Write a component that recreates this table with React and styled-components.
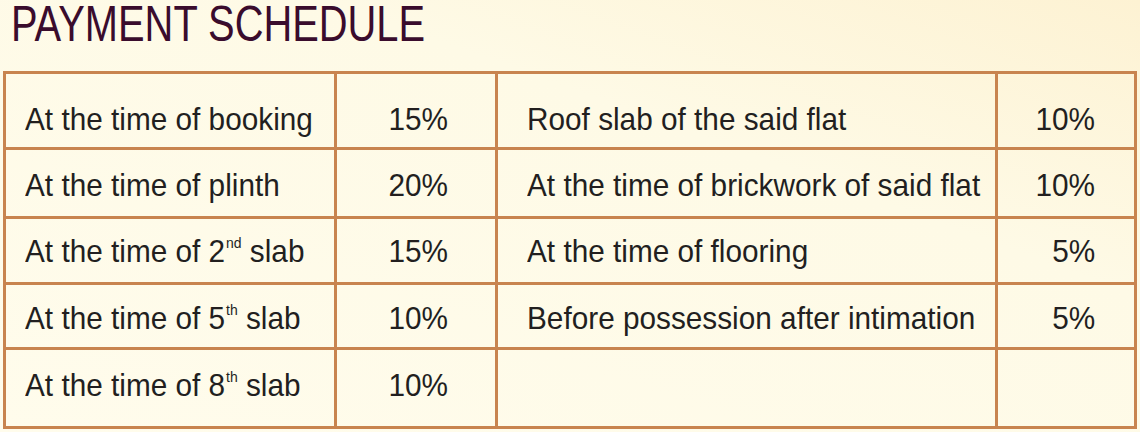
import React from 'react';
import styled, { createGlobalStyle } from 'styled-components';

const GlobalStyle = createGlobalStyle`
  html, body {
    margin: 0;
    padding: 0;
  }
  body {
    width: 1140px;
    height: 432px;
    overflow: hidden;
    background: linear-gradient(200deg, #fdf2d3 0%, #fefae6 35%, #fffcec 100%);
    font-family: "Liberation Sans", Arial, sans-serif;
  }
`;

const Page = styled.div`
  display: flex;
  flex-direction: column;
  padding: 0 3px;
`;

const Title = styled.h1`
  margin: 0;
  padding: 0 0 0 8px;
  height: 71px;
  box-sizing: border-box;
  font-size: 50px;
  line-height: 48px;
  font-weight: normal;
  color: #3a0c2d;
`;

// condensed face: squeeze the regular sans sideways
const Narrow = styled.span`
  display: inline-block;
  white-space: nowrap;
  transform: scaleX(${p => p.$sx});
  transform-origin: ${p => (p.$right ? 'right' : 'left')} center;
`;

const Grid = styled.div`
  display: grid;
  grid-template-columns: 331px 161px 500px 139px;
  border-left: 3px solid #c8844f;
  border-top: 3px solid #c8844f;
  width: 1134px;
  box-sizing: border-box;
`;

const Cell = styled.div`
  box-sizing: border-box;
  height: ${p => p.$h}px;
  padding-top: ${p => p.$pt}px;
  border-right: 3px solid #c8844f;
  border-bottom: 3px solid #c8844f;
  font-size: 32px;
  line-height: 36px;
  color: #221f1f;
  text-align: ${p => (p.$num ? 'right' : 'left')};
  padding-left: ${p => (p.$num ? 0 : p.$pl)}px;
  padding-right: ${p => (p.$num ? p.$pr : 0)}px;
  white-space: nowrap;
`;

const Sup = styled.sup`
  font-size: 15px;
  line-height: 0;
  vertical-align: 14px;
  margin-left: 1px;
`;

const rows = [
  { h: 76, pt: 27, a: <>At the time of booking</>, b: '15%', c: 'Roof slab of the said flat', d: '10%' },
  { h: 69, pt: 17, a: <>At the time of plinth</>, b: '20%', c: 'At the time of brickwork of said flat', d: '10%' },
  { h: 66, pt: 14, a: <>At the time of 2<Sup>nd</Sup> slab</>, b: '15%', c: 'At the time of flooring', d: '5%' },
  { h: 65, pt: 15, a: <>At the time of 5<Sup>th</Sup> slab</>, b: '10%', c: 'Before possession after intimation', d: '5%' },
  { h: 79, pt: 17, a: <>At the time of 8<Sup>th</Sup> slab</>, b: '10%', c: '', d: '' },
];

const SX = 0.93;

export default function App() {
  return (
    <>
      <GlobalStyle />
      <Page>
        <Title><Narrow $sx={0.797}>PAYMENT SCHEDULE</Narrow></Title>
        <Grid>
          {rows.map((r, i) => (
            <React.Fragment key={i}>
              <Cell $h={r.h} $pt={r.pt} $pl={19}><Narrow $sx={SX}>{r.a}</Narrow></Cell>
              <Cell $h={r.h} $pt={r.pt} $num $pr={47}><Narrow $sx={SX} $right>{r.b}</Narrow></Cell>
              <Cell $h={r.h} $pt={r.pt} $pl={29}><Narrow $sx={SX}>{r.c}</Narrow></Cell>
              <Cell $h={r.h} $pt={r.pt} $num $pr={39}><Narrow $sx={SX} $right>{r.d}</Narrow></Cell>
            </React.Fragment>
          ))}
        </Grid>
      </Page>
    </>
  );
}
